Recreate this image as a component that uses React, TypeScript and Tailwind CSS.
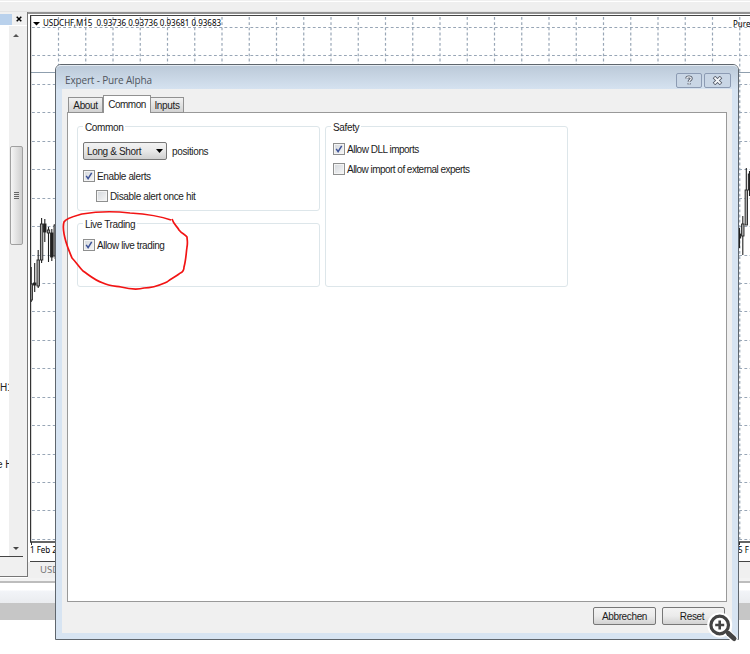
import React from "react";

// Chart grid spacing
const columns = Array.from({ length: 27 }, (_, i) => 28.5 + i * 27.25);
const rows = Array.from({ length: 19 }, (_, i) => 12 + i * 28.44);

// x, wick top, wick bottom, body top, body bottom, filled
const candles: [number, number, number, number, number, boolean][] = [
  [1.2, 251, 286, 268, 284, false],
  [4.7, 247, 276, 267, 269, true],
  [8.2, 234, 272, 244, 270, false],
  [11.6, 202, 247, 208, 244, false],
  [14.8, 203, 226, 208, 216, true],
  [18.5, 211, 246, 214, 217, false],
  [21.8, 213, 245, 217, 241, true],
  [25.2, 208, 243, 209, 240, false],
  [709.5, 212, 232, 218, 222, true],
  [712.8, 200, 239, 208, 220, false],
  [716.3, 152, 209, 174, 209, false],
  [719.5, 155, 180, 158, 174, true],
];

function Chart() {
  return (
    <svg width="720" height="541" viewBox="0 0 720 541" className="block">
      <g stroke="#98a6b6" strokeWidth="1.2" strokeDasharray="2.8 2.4">
        {columns.map((x) => (
          <line key={x} x1={x} y1="1" x2={x} y2="526" />
        ))}
        {rows.map((y) => (
          <line key={y} x1="2" y1={Math.round(y) - 0.5} x2="720" y2={Math.round(y) - 0.5} />
        ))}
      </g>
      <path d="M1 56.5H720" stroke="#8f9fae" />
      {candles.map(([x, top, bottom, open, close, filled]) => (
        <g key={x} stroke="#222">
          <line x1={x} y1={top} x2={x} y2={bottom} strokeWidth="1.1" />
          <rect x={x - 1.2} y={open} width="2.4" height={close - open} fill={filled ? "#222" : "#aaa"} strokeWidth="0.9" />
        </g>
      ))}
      <path d="M0.5 0V526H720" fill="none" stroke="#333" strokeWidth="1.4" />
      <path d="M1.5 526v3M709.5 526v3" stroke="#333" />
      <path d="M3 6h7l-3.5 3.5z" fill="#000" />
    </svg>
  );
}

function Navigator() {
  return (
    <div className="flex h-[565px] w-[28px] shrink-0 flex-col border-r border-b border-[#777] bg-[#f0f0f0]">
      <div className="flex h-[14px] items-center border-b border-white pt-px">
        <div className="h-[11px] w-3 bg-[#b9d1ec]" />
        <svg width="6" height="6" viewBox="0 0 6 6" className="ml-[4px]">
          <path d="M0.7 0.7l4.6 4.6M5.3 0.7L0.7 5.3" stroke="#000" strokeWidth="1.5" />
        </svg>
      </div>
      <div className="flex h-[531px] w-[23px] border-b border-[#444] bg-white">
        <div className="w-[9px] overflow-hidden whitespace-nowrap pt-[355px] font-['Liberation_Sans'] text-[10px] leading-[14px] text-[#222]">
          <p>H1</p>
          <p className="-ml-[3px] mt-[63px]">e H</p>
        </div>
        <div className="flex w-[14px] flex-col items-center bg-[#efefef]">
          <svg width="6" height="3" viewBox="0 0 6 3" className="mt-2">
            <path d="M0 3h6L3 0z" fill="#555" />
          </svg>
          <div className="mt-[109px] flex h-[99px] w-[13px] flex-col items-center justify-center gap-px rounded-[2px] border border-[#a0a0a0] bg-linear-to-r from-[#f5f5f5] to-[#cfcfcf]">
            <i className="h-px w-[5px] bg-[#666]" />
            <i className="h-px w-[5px] bg-[#666]" />
            <i className="h-px w-[5px] bg-[#666]" />
            <i className="h-px w-[5px] bg-[#666]" />
          </div>
          <svg width="6" height="3" viewBox="0 0 6 3" className="mt-auto mb-[6px]">
            <path d="M0 0h6L3 3z" fill="#444" />
          </svg>
        </div>
      </div>
    </div>
  );
}

function Background() {
  return (
    <div className="h-[654px] w-[750px] bg-white">
      <div className="h-3 border-b border-[#e4e4e4] bg-[#efefef] pt-px">
        <div className="h-px bg-white" />
      </div>
      <div className="flex h-[566px]">
        <Navigator />
        <div className="w-[722px]">
          <div className="h-[2px] bg-[#929292]" />
          <div className="h-px bg-white" />
          <div className="relative ml-[2px] h-[547px] border-t border-b border-[#444] bg-white font-['Noto_Sans'] text-[8px] text-black">
            <Chart />
            <span className="absolute left-[13px] top-[1px] whitespace-pre leading-[12px]">USDCHF,M15  0.93736 0.93736 0.93681 0.93683</span>
            <span className="absolute left-[703px] top-[2px] whitespace-nowrap leading-[12px]">Pure</span>
            <span className="absolute left-0 top-[528px] whitespace-nowrap leading-[12px]">1 Feb 2013</span>
            <span className="absolute left-[708px] top-[528px] whitespace-nowrap leading-[12px]">5 F</span>
          </div>
          <div className="h-[16px] bg-[#f0f0f0] pl-3 font-['Noto_Sans'] text-[9.5px] leading-[15px] text-[#777]">USDCHF</div>
        </div>
      </div>
      <div className="h-[5px] border-b-2 border-[#bdbdbd] bg-[#f3f3f3]" />
      <div className="h-5 bg-linear-to-b from-white from-35% via-[#f2f4f8] via-40% to-[#eaecef]" />
      <div className="h-[17px] bg-[#c6c6c6]" />
    </div>
  );
}

function CheckBox({ label, checked, className = "" }: { label: string; checked?: boolean; className?: string }) {
  return (
    <div className={"flex h-[12px] items-center gap-[2px] " + className}>
      <span className="flex size-[12px] shrink-0 items-center justify-center border border-[#8e8f8f] bg-linear-to-br from-[#d3d7dc] to-[#f7f7f7] shadow-[inset_0_0_0_1px_#f4f4f4]">
        {checked && (
          <svg width="8" height="8" viewBox="0 0 8 8">
            <path d="M1.2 3.8L3.1 6.6L6.7 0.8" fill="none" stroke="#3d5398" strokeWidth="1.5" />
          </svg>
        )}
      </span>
      <span className="whitespace-nowrap">{label}</span>
    </div>
  );
}

function GroupBox({ title, className = "", children }: { title: string; className?: string; children: React.ReactNode }) {
  return (
    <div className={"rounded-[3px] border border-[#dde6ea] " + className}>
      <div className="-mt-[6px] flex h-[13px] items-center pl-[5px]">
        <span className="bg-white px-[2px] leading-[13px]">{title}</span>
      </div>
      {children}
    </div>
  );
}

function Dialog() {
  return (
    <div className="absolute left-[55px] top-[64px] flex h-[576px] w-[684px] flex-col rounded-t-[6px] border border-[#5f666d] bg-[#d7e4f2] px-[6px] pb-[6px] font-['Liberation_Sans'] text-[10px] tracking-[-0.36px] text-[#1c1c1c]">
      <div className="-mx-[6px] flex h-6 shrink-0 items-center justify-between rounded-t-[5px] border-t border-[#e4ebf2] bg-linear-to-b from-[#bccad9] to-[#d5e2f0] pl-[9px] pr-[7px]">
        <span className="pt-[6px] font-['Open_Sans'] text-[10px] tracking-[-0.15px] text-[#50565e]">Expert - Pure Alpha</span>
        <div className="flex gap-[2px] pt-[6px]">
          <span className="flex h-[15px] w-[26px] items-center justify-center rounded-[2px] border border-[#8c9bb3] bg-[#c9d6e5]">
            <svg width="10" height="11" viewBox="0 0 10 11" fill="none">
              <path d="M2.8 3.5C2.8 1.5 7.2 1.3 7.2 3.6C7.2 5.2 5.1 4.9 5.1 6.8M5.1 8v1.5" stroke="#555b68" strokeWidth="3" />
              <path d="M2.8 3.5C2.8 1.5 7.2 1.3 7.2 3.6C7.2 5.2 5.1 4.9 5.1 6.8M5.1 8v1.5" stroke="#f4f7fa" strokeWidth="1.2" />
            </svg>
          </span>
          <span className="flex h-[15px] w-[27px] items-center justify-center rounded-[2px] border border-[#8c9bb3] bg-[#c9d6e5]">
            <svg width="11" height="9" viewBox="0 0 11 9" fill="none">
              <path d="M2 1l7 7M9 1L2 8" stroke="#555b68" strokeWidth="3.6" />
              <path d="M2.5 1.5l6 6M8.5 1.5l-6 6" stroke="#f4f7fa" strokeWidth="1.8" />
            </svg>
          </span>
        </div>
      </div>

      <div className="flex grow flex-col bg-[#f0f0f0] px-[5px] pt-[6px]">
        <div className="relative z-10 -mb-px flex h-[18px] items-end pl-[1px]">
          <span className="flex h-[16px] w-[35px] items-center justify-center border border-[#919191] bg-linear-to-b from-[#f2f2f2] to-[#d2d2d2]">About</span>
          <span className="flex h-[18px] w-[48px] items-center justify-center border border-b-0 border-[#919191] bg-white pb-px tracking-[-0.5px]">Common</span>
          <span className="flex h-[16px] w-[33px] items-center justify-center border border-l-0 border-[#919191] bg-linear-to-b from-[#f2f2f2] to-[#d2d2d2]">Inputs</span>
        </div>

        <div className="flex h-[490px] gap-[5px] border border-[#999] bg-white pl-[9px] pt-[13px]">
          <div className="w-[243px]">
            <GroupBox title="Common" className="h-[85px]">
              <div className="mt-[8px] flex items-center gap-[5px] pl-[5px]">
                <span className="flex h-[18px] w-[84px] items-center justify-between rounded-[2px] border border-[#777] bg-linear-to-b from-[#f2f2f2] via-[#e8e8e8] to-[#d0d0d0] px-[3px]">
                  Long &amp; Short
                  <svg width="7" height="4" viewBox="0 0 7 4">
                    <path d="M0 0h7L3.5 4z" fill="#000" />
                  </svg>
                </span>
                <span>positions</span>
              </div>
              <CheckBox label="Enable alerts" checked className="mt-[10px] pl-[5px]" />
              <CheckBox label="Disable alert once hit" className="mt-[8px] pl-[18px]" />
            </GroupBox>
            <GroupBox title="Live Trading" className="mt-[12px] h-[64px]">
              <CheckBox label="Allow live trading" checked className="mt-[8px] pl-[5px] tracking-[-0.42px]" />
            </GroupBox>
          </div>
          <GroupBox title="Safety" className="h-[161px] w-[243px]">
            <CheckBox label="Allow DLL imports" checked className="mt-[9px] pl-[7px] tracking-[-0.5px]" />
            <CheckBox label="Allow import of external experts" className="mt-[8px] pl-[7px] tracking-[-0.53px]" />
          </GroupBox>
        </div>

        <div className="flex justify-end gap-[6px] pr-[2px] pt-[5px]">
          <span className="flex h-[18px] w-[63px] items-center justify-center rounded-[2px] border border-[#777] bg-linear-to-b from-[#f3f3f3] via-[#ebebeb] to-[#d2d2d2]">Abbrechen</span>
          <span className="flex h-[18px] w-[63px] items-center justify-center rounded-[2px] border border-[#777] bg-linear-to-b from-[#f3f3f3] via-[#ebebeb] to-[#d2d2d2] pr-[3px]">Reset</span>
        </div>
      </div>
    </div>
  );
}

export default function App() {
  return (
    <div className="relative h-[654px] w-[750px] overflow-hidden">
      <Background />
      <Dialog />

      {/* Hand drawn marker around the live trading box */}
      <svg className="absolute left-[58px] top-[206px]" width="136" height="90" viewBox="58 206 136 90" fill="none">
        <path
          d="M171 220C160 216 145 214 130 213C113 211 94 212 82 214C75 216 66 218 64 222C62 228 64 235 66 242C68 249 70 253 72 258C76 262 79 267 83 271C89 275 94 280 103 283C109 286 115 286 121 287C129 289 137 290 144 288C154 288 160 285 167 282C170 279 175 277 179 274C181 272 184 273 184 267C186 260 186 254 187 247C188 242 187 240 187 237C185 234 182 234 179 230C177 226 174 225 172 219"
          stroke="#f21414"
          strokeWidth="1.7"
          strokeLinejoin="round"
        />
      </svg>

      {/* Zoom badge */}
      <svg className="absolute left-[706px] top-[610px]" width="34" height="34" viewBox="0 0 34 34" fill="none">
        <g stroke="#fff" strokeWidth="7" strokeLinecap="round">
          <circle cx="13.7" cy="15" r="9" />
          <path d="M21 22l7 7" />
        </g>
        <circle cx="13.7" cy="15" r="8.8" fill="#fff" stroke="#444" strokeWidth="3.2" />
        <path d="M9.2 15h9M13.7 10.5v9" stroke="#444" strokeWidth="2.6" />
        <path d="M20 21.5l2 2" stroke="#444" strokeWidth="3" />
        <path d="M22.5 23.5l5.5 5" stroke="#444" strokeWidth="5" strokeLinecap="round" />
      </svg>
    </div>
  );
}
